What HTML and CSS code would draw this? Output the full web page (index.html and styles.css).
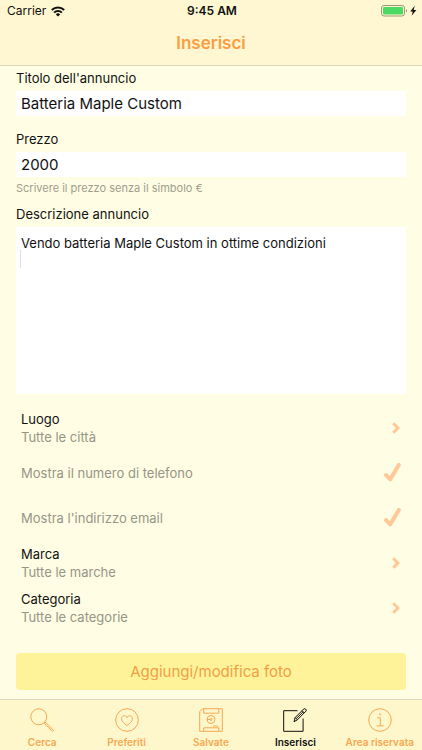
FILE: index.html
```html
<!DOCTYPE html>
<html lang="it">
<head>
    <meta charset="UTF-8">
    <meta name="viewport" content="width=device-width, initial-scale=1.0">
    <title>Inserisci</title>
    <link rel="stylesheet" href="styles.css">
</head>
<body>
    <header class="header">
        <div class="status-bar">
            <div class="carrier">
                Carrier
                <svg width="14" height="11" viewBox="0 0 14 11" fill="none" stroke="#111" stroke-width="2">
                    <path d="M.8 4a8.8 8.8 0 0 1 12.400 0"/>
                    <path d="M3.100 6.600a5.600 5.600 0 0 1 7.800 0"/>
                    <path d="M7 10.600L4.800 8.400a3.100 3.100 0 0 1 4.400 0z" fill="#111" stroke="none"/>
                </svg>
            </div>
            <div class="clock">9:45 AM</div>
            <div class="battery">
                <svg width="36" height="12" viewBox="0 0 36 12">
                    <rect x="0.5" y="0.5" width="23" height="10.5" rx="2.5" fill="none" stroke="#9c9878"/>
                    <rect x="2" y="2" width="20" height="7.5" rx="1.2" fill="#4cd964"/>
                    <path d="M25 4v3.6c1.4-.6 1.4-3 0-3.6z" fill="#9c9878"/>
                    <path d="M33.8.8L29.2 6.4h2.600l-1.200 4.400 4.800-5.800h-2.800z" fill="#111"/>
                </svg>
            </div>
        </div>
        <h1 class="title">Inserisci</h1>
    </header>

    <main class="content">
        <form class="ad-form">
            <div class="field">
                <label for="titolo">Titolo dell'annuncio</label>
                <input type="text" id="titolo" name="titolo" value="Batteria Maple Custom">
            </div>

            <div class="field field-price">
                <label for="prezzo">Prezzo</label>
                <input type="text" id="prezzo" name="prezzo" value="2000" inputmode="numeric">
                <p class="hint">Scrivere il prezzo senza il simbolo €</p>
            </div>

            <div class="field field-text">
                <label for="descrizione">Descrizione annuncio</label>
                <textarea id="descrizione" name="descrizione">Vendo batteria Maple Custom in ottime condizioni
</textarea>
                <span class="caret"></span>
            </div>

            <div class="options">
                <button type="button" class="option">
                    <span class="option-text">
                        <span class="option-name">Luogo</span>
                        <span class="option-value">Tutte le città</span>
                    </span>
                    <svg class="chevron" width="8" height="12" viewBox="0 0 8 12"><path d="M1.200 1.200L6 6l-4.800 4.800"/></svg>
                </button>
                <label class="option">
                    <span class="option-value">Mostra il numero di telefono</span>
                    <input type="checkbox" name="mostra-telefono" checked>
                    <svg class="check" width="17" height="19" viewBox="0 0 17 19"><path d="M2 12.2L6.2 16.4 14.8 2"/></svg>
                </label>
                <label class="option">
                    <span class="option-value">Mostra l'indirizzo email</span>
                    <input type="checkbox" name="mostra-email" checked>
                    <svg class="check" width="17" height="19" viewBox="0 0 17 19"><path d="M2 12.2L6.2 16.4 14.8 2"/></svg>
                </label>
                <button type="button" class="option">
                    <span class="option-text">
                        <span class="option-name">Marca</span>
                        <span class="option-value">Tutte le marche</span>
                    </span>
                    <svg class="chevron" width="8" height="12" viewBox="0 0 8 12"><path d="M1.200 1.200L6 6l-4.800 4.800"/></svg>
                </button>
                <button type="button" class="option">
                    <span class="option-text">
                        <span class="option-name">Categoria</span>
                        <span class="option-value">Tutte le categorie</span>
                    </span>
                    <svg class="chevron" width="8" height="12" viewBox="0 0 8 12"><path d="M1.200 1.200L6 6l-4.800 4.800"/></svg>
                </button>
            </div>

            <button type="button" class="photo-button">Aggiungi/modifica foto</button>
        </form>
    </main>

    <nav class="tab-bar">
        <a href="#cerca" class="tab">
            <svg width="24" height="24" viewBox="0 0 24 24">
                <circle cx="8.8" cy="8.8" r="8"/>
                <path d="M14.600 14.200l1.200.3 7.600 7.800-1 1-7.800-7.600z"/>
            </svg>
            Cerca
        </a>
        <a href="#preferiti" class="tab">
            <svg width="24" height="24" viewBox="0 0 24 24">
                <circle cx="12" cy="12" r="11.3"/>
                <path d="M12 17.6C9.5 15.7 6.6 13.6 6.6 10.7c0-1.8 1.2-3 2.7-3 1.2 0 2.2.7 2.7 1.9.5-1.2 1.500-1.9 2.700-1.9 1.500 0 2.700 1.200 2.700 3 0 2.900-2.900 5-5.400 6.900z"/>
            </svg>
            Preferiti
        </a>
        <a href="#salvate" class="tab">
            <svg width="24" height="24" viewBox="0 0 24 24">
                <path d="M3.6.7h19.700v22.600H.7V3.600z"/>
                <path d="M4.700.7v4.500h15.100V.7"/>
                <path d="M4.700 23.3v-3.500h15.100v3.500"/>
                <path d="M14 18h5"/>
                <circle cx="12" cy="11.500" r="4"/>
                <path d="M8 11.500h3.200"/>
                <circle cx="12" cy="11.500" r="1"/>
            </svg>
            Salvate
        </a>
        <a href="#inserisci" class="tab active">
            <svg width="24" height="24" viewBox="0 0 24 24">
                <path d="M14.500 2.700H.7v20.600h19.400V10.500"/>
                <path d="M11 13.700l1.200-4.200 8.600-8.600c1.300-.8 3.100.8 2.200 2.200l-8.600 8.700z"/>
                <path d="M12.200 9.500l2.200 2.300M19 2.700l2.300 2.300M13.300 10.600l6.800-6.800"/>
            </svg>
            Inserisci
        </a>
        <a href="#area" class="tab">
            <svg width="24" height="24" viewBox="0 0 24 24">
                <circle cx="12" cy="12" r="11.3"/>
                <path d="M9.300 9.800h3v8M8.800 17.900h6.800"/>
                <circle cx="12" cy="6.300" r=".6"/>
            </svg>
            Area riservata
        </a>
    </nav>
</body>
</html>
```

FILE: styles.css
```css
* {
    box-sizing: border-box;
}

body {
    margin: 0;
    min-height: 100vh;
    display: flex;
    flex-direction: column;
    background-color: #fffde3;
    font-family: Inter, Roboto, sans-serif;
    font-size: 13px;
    line-height: 18px;
    color: #111;
}

input,
textarea,
button {
    font-family: inherit;
    color: inherit;
    margin: 0;
}

/* Header */
.header {
    background-color: #fff7d1;
    border-bottom: 1px solid #dcd9bc;
}

.status-bar {
    display: grid;
    grid-template-columns: 1fr auto 1fr;
    align-items: center;
    height: 22px;
    padding: 0 5px 0 7px;
    font-size: 12px;
}

.carrier {
    display: flex;
    align-items: center;
    gap: 5px;
}

.clock {
    font-weight: 600;
}

.battery {
    display: flex;
    justify-content: flex-end;
}

.title {
    margin: 0;
    height: 43px;
    line-height: 43px;
    text-align: center;
    font-size: 17px;
    font-weight: 600;
    color: #fb9d41;
}

/* Form */
.content {
    flex: 1;
    padding: 3px 16px 9px;
}

.field {
    display: flex;
    flex-direction: column;
    margin-bottom: 14px;
    position: relative;
}

.field label {
    margin-bottom: 4px;
}

.field input {
    height: 25px;
    padding: 0 5px;
    border: none;
    background-color: #fff;
    font-size: 15px;
}

.field-price {
    margin-bottom: 8px;
}

.hint {
    margin: 2px 0 0;
    font-size: 11px;
    color: #a09e8f;
}

.field-text {
    margin-bottom: 11px;
}

.field textarea {
    height: 167px;
    padding: 7px 5px;
    border: none;
    background-color: #fff;
    font-size: 13px;
    line-height: 18px;
    resize: none;
}

.caret {
    position: absolute;
    left: 4px;
    top: 45px;
    width: 1px;
    height: 18px;
    background-color: #dcdff2;
}

.option {
    display: flex;
    justify-content: space-between;
    align-items: center;
    width: 100%;
    height: 45px;
    padding: 0 5px;
    border: none;
    background: none;
    font-size: 13px;
    line-height: 18px;
    text-align: left;
}

.option input {
    appearance: none;
    width: 0;
    height: 0;
}

.option-value {
    color: #969588;
}

.option-text {
    display: flex;
    flex-direction: column;
    flex: 1;
}

.option .option-value {
    flex: 1;
}

.chevron,
.check {
    fill: none;
    stroke: #ffc896;
}

.chevron {
    margin-right: 1px;
    stroke-width: 3;
}

.check {
    stroke-width: 4;
    stroke-linecap: round;
    stroke-linejoin: round;
    visibility: hidden;
}

.option input:checked + .check {
    visibility: visible;
}

.photo-button {
    width: 100%;
    height: 37px;
    margin-top: 23px;
    border: none;
    border-radius: 4px;
    background-color: #fff39a;
    color: #f0a045;
    font-size: 15px;
}

/* Tab bar */
.tab-bar {
    display: grid;
    grid-template-columns: repeat(5, 1fr);
    height: 51px;
    border-top: 1px solid #dcd9bc;
    background-color: #fff7cc;
}

.tab {
    display: flex;
    flex-direction: column;
    align-items: center;
    padding-top: 8px;
    gap: 3px;
    font-size: 10px;
    font-weight: 600;
    line-height: 14px;
    color: #f7a850;
    text-decoration: none;
    white-space: nowrap;
}

.tab svg {
    fill: none;
    stroke: currentColor;
    stroke-width: 1;
}

.tab.active {
    color: #111;
}
```
